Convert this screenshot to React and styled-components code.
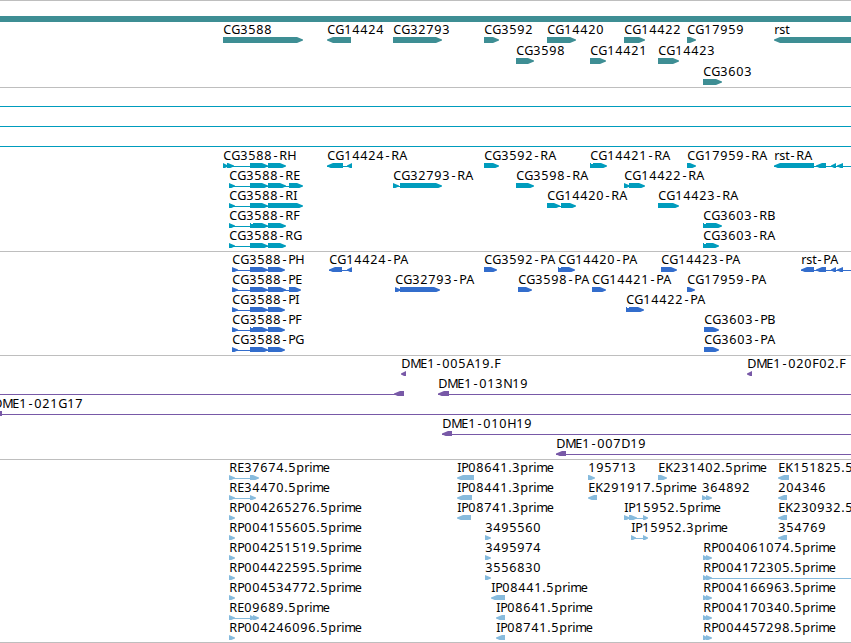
import React from 'react';
import styled, { createGlobalStyle } from 'styled-components';

const GlobalStyle = createGlobalStyle`
  body {
    margin: 0;
    background: #fff;
  }
`;

const Browser = styled.main`
  width: 851px;
  height: 643px;
  overflow: hidden;
  display: flex;
  flex-direction: column;
  border-bottom: 1px solid #bebebe;
  box-sizing: border-box;
`;

const Panel = styled.section`
  display: flex;
  flex-direction: column;
  flex: none;
  border-top: 1px solid #bebebe;
  padding-bottom: ${({ $bottom }) => $bottom ?? 3}px;
  color: ${({ $color }) => $color};
`;

const Chromosome = styled.div`
  height: 6px;
  margin-top: 15px;
  background: currentColor;
`;

const Track = styled.svg`
  display: block;
  flex: none;
  width: 851px;
  height: ${({ $height }) => $height}px;
  overflow: hidden;
  fill: currentColor;
`;

const Label = styled.text`
  fill: #000;
  font-family: 'Noto Sans', 'DejaVu Sans', sans-serif;
  font-size: 12.6px;
  white-space: pre;
`;

const MID = 18;

// whole-pixel advances, every digit takes 8
const ADVANCE = {
  C: 8, G: 9, R: 8, P: 7, A: 8, B: 8, H: 9, E: 7, I: 4, F: 7, K: 8,
  D: 9, M: 10, N: 9, '-': 7, '.': 4,
  p: 8, r: 5, i: 3, m: 10.5, e: 7, s: 6, t: 4,
};

function glyphPositions(label, start) {
  let x = start;
  return [...label]
    .map((char) => {
      // the hyphen is narrower than its cell, so centre it
      const at = char === '-' ? x + 1.5 : x + 0.2;
      x += ADVANCE[char] ?? 8;
      return at;
    })
    .join(' ');
}

function Exon({ from, to, reverse, notch }) {
  const tip = Math.min(6, to - from);
  const tail = reverse ? to : from;
  const head = reverse ? from : to;
  const neck = reverse ? head + tip : head - tip;
  return (
    <>
      <polygon
        points={`${tail},15 ${neck},15 ${head},17.6 ${head},18.4 ${neck},21 ${tail},21`}
      />
      {notch && (
        <>
          <rect x={from + 1} y="15" width="2" height="1" fill="#fff" />
          <rect x={from + 1} y="20" width="2" height="1" fill="#fff" />
        </>
      )}
    </>
  );
}

function Feature({ label, x, exons = [], reverse, notch, line }) {
  const start = line?.[0] ?? exons[0][0];
  const end = line?.[1] ?? exons[exons.length - 1][1] - 2;
  return (
    <g>
      {(line || exons.length > 1) && (
        <rect x={start} y={MID} width={end - start} height="1" />
      )}
      {exons.map(([from, to], i) => (
        <Exon
          key={from}
          from={from}
          to={to}
          reverse={reverse}
          notch={notch === i}
        />
      ))}
      {label && (
        <Label x={glyphPositions(label, x ?? exons[0][0])} y="12">
          {label}
        </Label>
      )}
    </g>
  );
}

function Rows({ rows, height = 20 }) {
  return rows.map((features, i) => (
    <Track key={i} $height={height}>
      {features.map((feature, j) => (
        <Feature key={j} {...feature} />
      ))}
    </Track>
  ));
}

const fwd = (label, exons, rest) => ({ label, exons, ...rest });
const rev = (label, exons, rest) => ({ label, exons, reverse: true, ...rest });

const genes = [
  [
    fwd('CG3588', [[223, 303]]),
    rev('CG14424', [[327, 351]]),
    fwd('CG32793', [[393, 442]]),
    fwd('CG3592', [[484, 499]]),
    fwd('CG14420', [[547, 576]]),
    fwd('CG14422', [[624, 645]]),
    fwd('CG17959', [[687, 696]]),
    rev('rst', [[774, 860]]),
  ],
  [
    fwd('CG3598', [[516, 534]]),
    fwd('CG14421', [[590, 606]]),
    fwd('CG14423', [[658, 679]]),
  ],
  [fwd('CG3603', [[703, 722]])],
];

const fullLine = [{ line: [0, 851] }];

const transcripts = [
  fullLine,
  fullLine,
  fullLine,
  [
    fwd('CG3588-RH', [[223, 228], [227, 234], [250, 268], [268, 286]]),
    rev('CG14424-RA', [[327, 343], [347, 352]]),
    fwd('CG3592-RA', [[484, 499]]),
    fwd('CG14421-RA', [[590, 607]], { notch: 0 }),
    fwd('CG17959-RA', [[687, 696]]),
    rev('rst-RA', [[774, 814], [816, 826], [831, 836], [837, 843]], {
      line: [774, 851],
    }),
  ],
  [
    fwd('CG3588-RE', [[229, 235], [250, 268], [268, 286], [289, 303]]),
    fwd('CG32793-RA', [[393, 399], [400, 442]]),
    fwd('CG3598-RA', [[516, 534]]),
    fwd('CG14422-RA', [[624, 630], [629, 645]]),
  ],
  [
    fwd('CG3588-RI', [[229, 235], [250, 268], [268, 303]]),
    fwd('CG14420-RA', [[547, 560], [561, 576]]),
    fwd('CG14423-RA', [[658, 679]]),
  ],
  [
    fwd('CG3588-RF', [[229, 235], [250, 268], [268, 286]], { notch: 1 }),
    fwd('CG3603-RB', [[703, 722]], { notch: 0 }),
  ],
  [
    fwd('CG3588-RG', [[229, 235], [250, 268], [268, 286]]),
    fwd('CG3603-RA', [[703, 719]], { notch: 0 }),
  ],
];

const proteins = [
  [
    fwd('CG3588-PH', [[232, 238], [250, 268], [268, 285]]),
    rev('CG14424-PA', [[329, 342], [347, 352]]),
    fwd('CG3592-PA', [[484, 497]]),
    fwd('CG14420-PA', [[558, 575]], { notch: 0 }),
    fwd('CG14423-PA', [[661, 677]]),
    rev('rst-PA', [[801, 814], [816, 826], [831, 836], [837, 843]], {
      line: [801, 851],
    }),
  ],
  [
    fwd('CG3588-PE', [[232, 238], [250, 268], [268, 286], [289, 301]]),
    fwd('CG32793-PA', [[395, 401], [400, 440]]),
    fwd('CG3598-PA', [[518, 532]]),
    fwd('CG14421-PA', [[592, 606]]),
    fwd('CG17959-PA', [[687, 695]]),
  ],
  [
    fwd('CG3588-PI', [[232, 238], [250, 268], [268, 285]]),
    fwd('CG14422-PA', [[626, 644]], { notch: 0 }),
  ],
  [
    fwd('CG3588-PF', [[232, 238], [250, 268], [268, 285]], { notch: 1 }),
    fwd('CG3603-PB', [[704, 719]]),
  ],
  [
    fwd('CG3588-PG', [[232, 238], [250, 268], [268, 285]]),
    fwd('CG3603-PA', [[704, 719]]),
  ],
];

const clones = [
  [
    rev('DME1-005A19.F', [[401, 406]]),
    rev('DME1-020F02.F', [[747, 752]]),
  ],
  [
    rev('', [[394, 404]], { line: [0, 404] }),
    rev('DME1-013N19', [[438, 449]], { line: [438, 851] }),
  ],
  [rev('DME1-021G17', [[-8, 2]], { x: -7, line: [0, 851] })],
  [rev('DME1-010H19', [[442, 452]], { line: [442, 851] })],
  [rev('DME1-007D19', [[556, 566]], { line: [556, 851] })],
];

const single = [[229, 235]];
const pair = [[703, 708], [706, 712]];

const ests = [
  [
    fwd('RE37674.5prime', [[229, 235], [250, 259]]),
    rev('IP08641.3prime', [[457, 474]]),
    fwd('195713', [[588, 595]]),
    fwd('EK231402.5prime', [[658, 667]]),
    rev('EK151825.5prime', [[778, 789]]),
  ],
  [
    fwd('RE34470.5prime', [[229, 235], [250, 256]]),
    rev('IP08441.3prime', [[457, 472]]),
    rev('EK291917.5prime', [[588, 597]]),
    fwd('364892', [[702, 707], [706, 712]]),
    rev('204346', [[778, 787]]),
  ],
  [
    fwd('RP004265276.5prime', single),
    rev('IP08741.3prime', [[457, 471]]),
    fwd('IP15952.5prime', [[624, 630], [629, 637], [643, 648]]),
    rev('EK230932.5prime', [[778, 787]]),
  ],
  [
    fwd('RP004155605.5prime', single),
    fwd('3495560', [[485, 491]]),
    fwd('IP15952.3prime', [[631, 636], [643, 648]]),
    rev('354769', [[778, 787]]),
  ],
  [
    fwd('RP004251519.5prime', single),
    fwd('3495974', [[485, 491]]),
    fwd('RP004061074.5prime', pair),
  ],
  [
    fwd('RP004422595.5prime', single),
    fwd('3556830', [[485, 491]]),
    fwd('RP004172305.5prime', pair, { line: [703, 851] }),
  ],
  [
    fwd('RP004534772.5prime', single),
    rev('IP08441.5prime', [[491, 505]]),
    fwd('RP004166963.5prime', pair),
  ],
  [
    fwd('RE09689.5prime', [[229, 235], [250, 255], [253, 259]]),
    rev('IP08641.5prime', [[496, 505]]),
    fwd('RP004170340.5prime', pair),
  ],
  [
    fwd('RP004246096.5prime', single),
    rev('IP08741.5prime', [[496, 505]]),
    fwd('RP004457298.5prime', pair),
  ],
];

export default function App() {
  return (
    <>
      <GlobalStyle />
      <Browser>
        <Panel $color="#3e8e94" $bottom={2}>
          <Chromosome />
          <Rows rows={genes} height={21} />
        </Panel>
        <Panel $color="#009cbd">
          <Rows rows={transcripts} />
        </Panel>
        <Panel $color="#336dcc">
          <Rows rows={proteins} />
        </Panel>
        <Panel $color="#7859a7">
          <Rows rows={clones} />
        </Panel>
        <Panel $color="#87bbdd" $bottom={2}>
          <Rows rows={ests} />
        </Panel>
      </Browser>
    </>
  );
}
